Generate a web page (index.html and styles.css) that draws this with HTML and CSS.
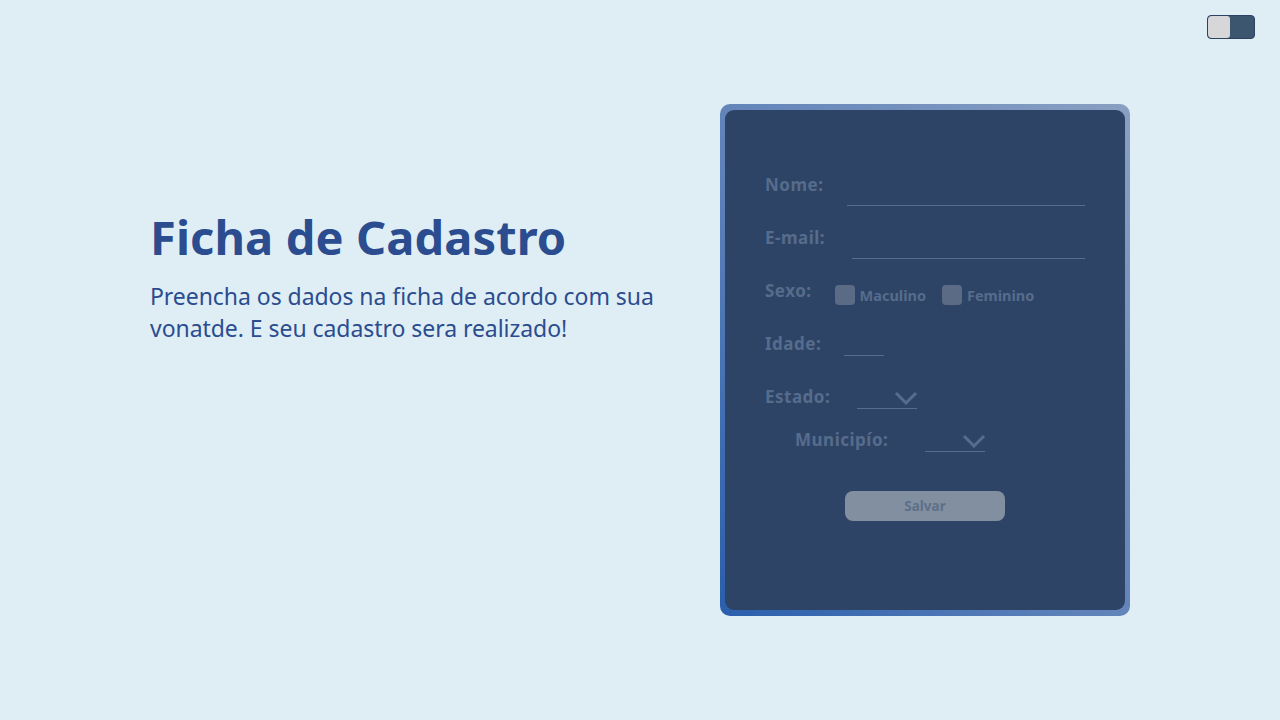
FILE: index.html
```html
<!DOCTYPE html>
<html lang="pt">
<head>
<meta charset="utf-8">
<title>Ficha de Cadastro</title>
<link rel="stylesheet" href="styles.css">
</head>
<body>
<div class="toggle"><span class="knob"></span></div>
<main class="page">
  <section class="intro">
    <h1 class="title">Ficha de Cadastro</h1>
    <p class="lead">Preencha os dados na ficha de acordo com sua vonatde. E seu cadastro sera realizado!</p>
  </section>
  <div class="card-frame">
    <form class="card">
      <div class="row">
        <label class="label">Nome:</label>
        <span class="field grow"></span>
      </div>
      <div class="row row-email">
        <label class="label">E-mail:</label>
        <span class="field grow"></span>
      </div>
      <div class="row row-sexo">
        <label class="label">Sexo:</label>
        <span class="check"></span><span class="opt">Maculino</span>
        <span class="check"></span><span class="opt">Feminino</span>
      </div>
      <div class="row">
        <label class="label">Idade:</label>
        <span class="field short"></span>
      </div>
      <div class="row row-estado">
        <label class="label">Estado:</label>
        <span class="field select">
          <svg class="chev" width="24" height="14" viewBox="0 0 24 14"><polyline points="2,2 12,12 22,2" fill="none" stroke="#566c8c" stroke-width="3"/></svg>
        </span>
      </div>
      <div class="row row-mun">
        <label class="label">Municipío:</label>
        <span class="field select">
          <svg class="chev" width="24" height="14" viewBox="0 0 24 14"><polyline points="2,2 12,12 22,2" fill="none" stroke="#566c8c" stroke-width="3"/></svg>
        </span>
      </div>
      <div class="actions">
        <button type="button" class="btn">Salvar</button>
      </div>
    </form>
  </div>
</main>
</body>
</html>
```
FILE: styles.css
```css
html, body {
  margin: 0;
  padding: 0;
}
body {
  background: #dfeef5;
  font-family: "Noto Sans", "Open Sans", sans-serif;
  width: 1280px;
  height: 720px;
  position: relative;
  overflow: hidden;
}
.toggle {
  position: absolute;
  top: 15px;
  right: 25px;
  width: 46px;
  height: 22px;
  border: 1px solid #2c4260;
  border-radius: 4px;
  background: #3d5670;
  display: flex;
}
.knob {
  width: 22px;
  height: 22px;
  background: #d7d7d9;
  border-radius: 4px 3px 3px 4px;
}
.page {
  display: flex;
  align-items: flex-start;
  padding: 104px 0 0 150px;
}
.intro {
  width: 520px;
  padding-top: 100px;
}
.title {
  margin: 0;
  font-size: 47px;
  font-weight: 700;
  color: #2b4c8f;
  line-height: 66px;
  letter-spacing: 0.1px;
}
.lead {
  margin: 10px 0 0;
  font-size: 23px;
  line-height: 32px;
  color: #2b4c8f;
  letter-spacing: -0.05px;
}
.card-frame {
  margin-left: 50px;
  width: 400px;
  height: 500px;
  padding: 6px 5px;
  border-radius: 10px;
  background: linear-gradient(to top right, #2a5eac 0%, #5a7fb8 40%, #8aa0c2 100%);
}
.card {
  box-sizing: border-box;
  width: 400px;
  height: 500px;
  background: #2e4466;
  border-radius: 9px;
  padding: 64px 40px 0 40px;
}
.row {
  display: flex;
  align-items: flex-start;
  height: 53px;
  gap: 24px;
}
.row-email {
  gap: 27px;
}
.label {
  font-size: 17px;
  font-weight: 700;
  color: #566c8c;
  line-height: 22px;
  letter-spacing: 0.5px;
}
.field {
  height: 32px;
  border-bottom: 1px solid #566c8c;
  box-sizing: border-box;
  display: block;
}
.grow {
  flex: 1;
}
.short {
  width: 40px;
  height: 23px;
  margin-left: -1px;
}
.row-sexo {
  gap: 0;
}
.row-sexo .label {
  margin-right: 23px;
}
.check {
  width: 20px;
  height: 20px;
  border-radius: 4px;
  background: #5b6b86;
  margin-top: 5px;
  margin-right: 5px;
}
.opt {
  font-size: 14.5px;
  font-weight: 700;
  color: #566c8c;
  line-height: 30px;
  margin-right: 16px;
}
.select {
  width: 60px;
  height: 23px;
  position: relative;
  margin-left: 3px;
}
.chev {
  position: absolute;
  right: -1px;
  top: 5px;
}
.row-estado {
  height: 43px;
}
.row-mun {
  padding-left: 30px;
  height: 62px;
  gap: 34px;
}
.actions {
  display: flex;
  justify-content: center;
}
.btn {
  width: 160px;
  height: 30px;
  border: none;
  border-radius: 8px;
  background: #828fa1;
  color: #5d6f89;
  font-family: "Noto Sans", sans-serif;
  font-size: 13.5px;
  font-weight: 700;
  padding: 0;
}
```
